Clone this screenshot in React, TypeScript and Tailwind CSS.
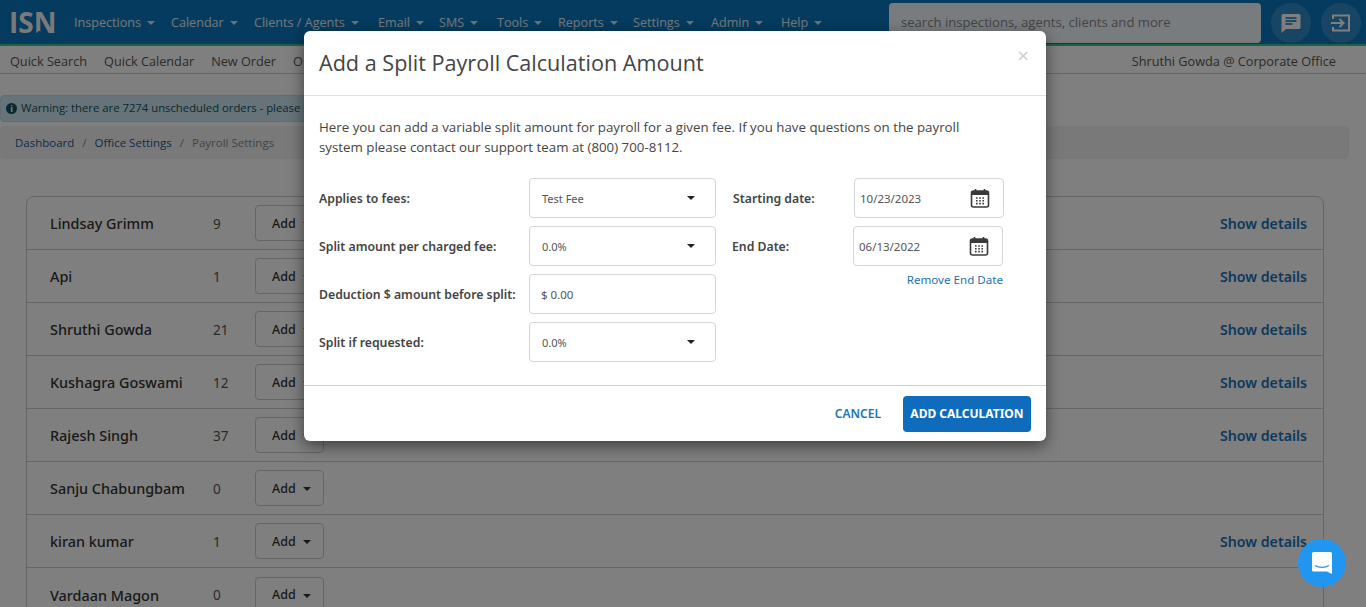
const navItems = [
  { label: 'Inspections', w: 97 },
  { label: 'Calendar', w: 83 },
  { label: 'Clients / Agents', w: 124 },
  { label: 'Email', w: 61 },
  { label: 'SMS', w: 58 },
  { label: 'Tools', w: 61 },
  { label: 'Reports', w: 75 },
  { label: 'Settings', w: 78 },
  { label: 'Admin', w: 70 },
  { label: 'Help', w: 60 },
];

const people = [
  { name: 'Lindsay Grimm', count: 9, details: true },
  { name: 'Api', count: 1, details: true },
  { name: 'Shruthi Gowda', count: 21, details: true },
  { name: 'Kushagra Goswami', count: 12, details: true },
  { name: 'Rajesh Singh', count: 37, details: true },
  { name: 'Sanju Chabungbam', count: 0, details: false },
  { name: 'kiran kumar', count: 1, details: true },
  { name: 'Vardaan Magon', count: 0, details: false },
];

const Caret = ({ className = '' }: { className?: string }) => (
  <span className={`inline-block w-0 h-0 border-x-[4px] border-x-transparent border-t-[4px] ${className}`} />
);

const CalendarIcon = () => (
  <svg width="20" height="20" viewBox="0 0 20 20" fill="none" className="text-[#3a3a3a]">
    <rect x="1.5" y="3" width="17" height="16" rx="2" stroke="currentColor" strokeWidth="1.6" />
    <path d="M1.5 4.5a2 2 0 0 1 2-1.5h13a2 2 0 0 1 2 1.5V7h-17z" fill="currentColor" />
    <path d="M5.5 1v3M14.5 1v3" stroke="currentColor" strokeWidth="1.6" />
    <path d="M6 10h1.6M9.2 10h1.6M12.4 10h1.6M6 12.8h1.6M9.2 12.8h1.6M12.4 12.8h1.6M6 15.6h1.6M9.2 15.6h1.6M12.4 15.6h1.6" stroke="currentColor" strokeWidth="1.6" />
  </svg>
);

const SelectBox = ({ value }: { value: string }) => (
  <div className="w-[187px] h-10 border border-[#d5d5d5] rounded flex items-center justify-between pl-3 pr-5 text-[11px] text-[#555]">
    <span className="pt-[2px]">{value}</span>
    <Caret className="border-t-[#222]" />
  </div>
);

const Row = ({ label, children }: { label: string; children: React.ReactNode }) => (
  <div className="flex items-center h-10">
    <label className="w-[210px] pt-[2px] text-[12.25px] font-semibold text-[#444]">{label}</label>
    {children}
  </div>
);

export default function App() {
  return (
    <div className="relative h-screen overflow-hidden bg-white font-['Noto_Sans',sans-serif]">
      {/* page behind the modal */}
      <div className="h-[46px] bg-[#0b76bd] border-b-2 border-[#3fc08f] flex items-center pl-[9px] font-['Open_Sans',sans-serif]">
        <div className="relative w-[46px] text-[28px] leading-none font-bold text-[#f4f4f4]">
          ISN
          <span className="absolute left-[28px] bottom-[1px] w-[4px] h-[4px] rounded-full bg-[#0b76bd]" />
        </div>
        <nav className="flex ml-[19px] text-[12.6px] text-white/90 pt-[3px]">
          {navItems.map((n) => (
            <span key={n.label} className="flex items-center gap-[6px]" style={{ width: n.w }}>
              {n.label}
              <Caret className="border-t-white/80" />
            </span>
          ))}
        </nav>
        <div className="ml-auto flex items-center gap-[10px] pr-[5px] pt-[1px]">
          <div className="w-[372px] h-10 rounded bg-white/95 flex items-center pl-3 text-[13.1px] text-[#888]">search inspections, agents, clients and more</div>
          <div className="w-10 h-10 rounded-full bg-white/15 flex items-center justify-center">
            <svg width="22" height="22" viewBox="0 0 22 22" fill="white"><path d="M3 2h16a1.5 1.5 0 0 1 1.500 1.500v12a1.500 1.500 0 0 1-1.500 1.500H6l-4.500 4V3.500A1.500 1.500 0 0 1 3 2z" /><path d="M5.500 6h11M5.500 9h11M5.500 12h7" stroke="#0b76bd" strokeWidth="1.600" /></svg>
          </div>
          <div className="w-10 h-10 rounded-full bg-white/15 flex items-center justify-center">
            <svg width="20" height="20" viewBox="0 0 20 20" fill="none" stroke="white" strokeWidth="2"><path d="M2 6V2.500h16v15H2V14" /><path d="M0 10h12M8.500 6l4 4-4 4" /></svg>
          </div>
        </div>
      </div>
      <div className="h-[28px] border-b border-[#ccc] flex items-center justify-between pl-[10px] pr-[30px] pt-[5px] text-[12.7px] text-[#555] font-['Open_Sans',sans-serif]">
        <div className="flex gap-[17px]">
          <span>Quick Search</span>
          <span>Quick Calendar</span>
          <span>New Order</span>
          <span>Open</span>
        </div>
        <span>Shruthi Gowda @ Corporate Office</span>
      </div>
      <div className="mt-[21px] h-[27px] w-[700px] bg-[#cfe6f0] border border-[#bcdde8] rounded flex items-center gap-[4px] pl-[5px] text-[11.3px] text-[#0c5460] font-['Open_Sans',sans-serif]">
        <span className="w-[11px] h-[11px] rounded-full bg-[#0c5460] text-white text-[9px] leading-[11px] text-center font-bold">i</span>
        Warning: there are 7274 unscheduled orders - please schedule them
      </div>
      <div className="mt-[4px] h-[33px] mr-[17px] bg-[#f3f3f3] rounded flex items-center gap-[8px] pl-[15px] text-[11.5px] text-[#888] font-['Open_Sans',sans-serif]">
        <span className="text-[#1a5a96]">Dashboard</span>
        <span>/</span>
        <span className="text-[#1a5a96]">Office Settings</span>
        <span>/</span>
        <span>Payroll Settings</span>
      </div>
      <div className="mt-[37px] ml-[26px] mr-[42px] border border-[#ccc] rounded-lg">
        {people.map((p) => (
          <div key={p.name} className="h-[53px] border-b border-[#ccc] flex items-center pl-[23px] pr-4 text-[14.4px] last:border-b-0">
            <span className="w-[163px] pt-[2px] font-medium text-[#333]">{p.name}</span>
            <span className="w-[42px] pt-[2px] text-[#555] text-[13.5px]">{p.count}</span>
            <span className="w-[69px] h-9 pt-[2px] border border-[#ccc] rounded flex items-center pl-[16px] gap-[7px] text-[12.5px] text-[#333] font-medium">
              Add <Caret className="border-t-[#333]" />
            </span>
            {p.details && <span className="ml-auto pt-[2px] font-semibold text-[#1a73b8] text-[14.2px]">Show details</span>}
          </div>
        ))}
      </div>

      {/* dim layer */}
      <div className="absolute inset-0 bg-black/50" />

      {/* chat launcher */}
      <div className="absolute left-[1298px] top-[539px] w-12 h-12 rounded-full bg-[#2196f0] flex items-center justify-center">
        <svg width="22" height="24" viewBox="0 0 22 24"><path d="M2.500 1h17A1.500 1.500 0 0 1 21 2.500V23l-5-2.500H2.500A1.500 1.500 0 0 1 1 19V2.500A1.500 1.500 0 0 1 2.500 1z" fill="white" /><path d="M4 14.500c4 2.500 10 2.500 14 0" stroke="#2196f0" strokeWidth="1.200" fill="none" /></svg>
      </div>

      {/* modal */}
      <div className="absolute left-[304px] top-[31px] w-[742px] h-[410px] bg-white rounded-md shadow-[0_5px_15px_rgba(0,0,0,0.5)] flex flex-col">
        <div className="h-[65px] border-b border-[#e0e0e0] flex items-center justify-between pl-[15px] pr-[17px] font-['Open_Sans',sans-serif]">
          <h1 className="text-[21.6px] text-[#444]">Add a Split Payroll Calculation Amount</h1>
          <span className="text-[20px] leading-none text-[#ccc] -mt-[14px]">×</span>
        </div>
        <div className="flex-1 px-[15px] pt-[21px]">
          <p className="text-[13.3px] leading-[20px] text-[#444] w-[670px] font-['Open_Sans',sans-serif]">
            Here you can add a variable split amount for payroll for a given fee. If you have questions on the payroll system please contact our support team at (800) 700-8112.
          </p>
          <div className="mt-[21px] flex">
            <div className="flex flex-col gap-2">
              <Row label="Applies to fees:"><SelectBox value="Test Fee" /></Row>
              <Row label="Split amount per charged fee:"><SelectBox value="0.0%" /></Row>
              <Row label="Deduction $ amount before split:">
                <div className="w-[187px] h-10 pt-[2px] border border-[#d5d5d5] rounded flex items-center pl-[11px] text-[11.5px] text-[#555]">$ 0.00</div>
              </Row>
              <Row label="Split if requested:"><SelectBox value="0.0%" /></Row>
            </div>
            <div className="ml-[17px] flex flex-col gap-2">
              <div className="flex items-center h-10">
                <label className="w-[121px] pt-[2px] text-[12.25px] font-semibold text-[#444]">Starting date:</label>
                <div className="w-[150px] h-10 border border-[#d5d5d5] rounded flex items-center justify-between pl-[5px] pr-[13px] text-[11.5px] text-[#555]">
                  <span className="pt-[2px]">10/23/2023</span>
                  <CalendarIcon />
                </div>
              </div>
              <div className="flex items-center h-10 -ml-[1px]">
                <label className="w-[121px] pt-[2px] text-[12.25px] font-semibold text-[#444]">End Date:</label>
                <div className="w-[150px] h-10 border border-[#d5d5d5] rounded flex items-center justify-between pl-[5px] pr-[13px] text-[11.5px] text-[#555]">
                  <span className="pt-[2px]">06/13/2022</span>
                  <CalendarIcon />
                </div>
              </div>
              <a className="-mt-[3px] pr-[1px] text-right text-[11.6px] text-[#1a73b8]">Remove End Date</a>
            </div>
          </div>
        </div>
        <div className="h-[56px] border-t border-[#d0d0d0] flex items-center justify-end gap-[22px] pr-[15px]">
          <span className="text-[12px] font-semibold text-[#1a73b8]">CANCEL</span>
          <button className="h-9 w-[128px] rounded bg-[#0f6cbd] text-[12px] font-bold text-white">ADD CALCULATION</button>
        </div>
      </div>
    </div>
  );
}
